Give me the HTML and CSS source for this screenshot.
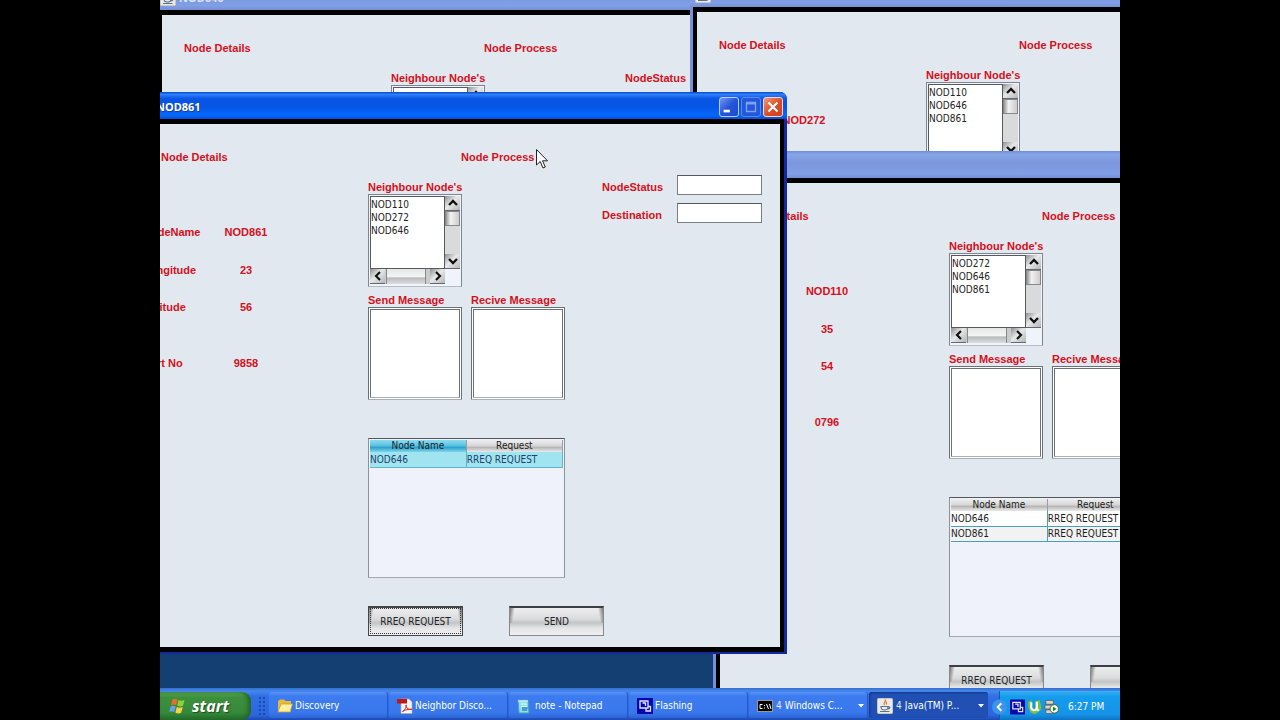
FILE: index.html
```html
<!DOCTYPE html>
<html lang="en">
<head>
<meta charset="utf-8">
<title>Node windows</title>
<link rel="stylesheet" href="styles.css">
</head>
<body>
<svg class="defs" aria-hidden="true">
  <symbol id="up" viewBox="0 0 10 8"><path d="M1 6 5 2 9 6" fill="none" stroke="#111" stroke-width="2.4"/></symbol>
  <symbol id="down" viewBox="0 0 10 8"><path d="M1 2 5 6 9 2" fill="none" stroke="#111" stroke-width="2.4"/></symbol>
  <symbol id="left" viewBox="0 0 8 10"><path d="M6 1 2 5 6 9" fill="none" stroke="#111" stroke-width="2.2"/></symbol>
  <symbol id="right" viewBox="0 0 8 10"><path d="M2 1 6 5 2 9" fill="none" stroke="#111" stroke-width="2.2"/></symbol>
  <symbol id="java" viewBox="0 0 16 16"><rect x=".5" y=".5" width="15" height="15" rx="1" fill="#eceae6" stroke="#c9c7c4"/><path d="M8 1.5c2 2-2.500 3-.5 5.500M9.500 3.500c-1 1 .8 1.500-.2 3" fill="none" stroke="#d9772b" stroke-width="1.200"/><path d="M4 8.500h7c0 3-1 3.500-3.500 3.500S4 11.500 4 8.500zM11 9c3-.5 2 2-.5 2M3 13.500h9.500" fill="none" stroke="#59738c" stroke-width="1.200"/></symbol>
  <symbol id="flash" viewBox="0 0 16 16"><rect width="16" height="16" fill="#0808a8"/><path d="M3 3h8v7H3zM5.500 5h3v3M11 8.500h2.500V13H9v-3" fill="none" stroke="#dfe3ff" stroke-width="1.300"/></symbol>
</svg>

<main class="desktop">
  <div class="workspace">

    <section class="window window-646" aria-label="NOD646">
      <header class="titlebar"><svg class="app-icon"><use href="#java"/></svg><h1>NOD646</h1></header>
      <div class="client">
        <div class="details"><h2>Node Details</h2></div>
        <div class="process">
          <h2>Node Process</h2>
          <h3>Neighbour Node's</h3>
          <div class="listbox">
            <select multiple aria-label="Neighbour nodes of NOD646"></select>
            <div class="vbar"><button aria-label="Scroll up"><svg><use href="#up"/></svg></button></div>
          </div>
        </div>
        <div class="status"><label for="s646">NodeStatus</label><input id="s646"></div>
      </div>
    </section>

    <section class="window window-272" aria-label="NOD272">
      <header class="titlebar"><svg class="app-icon"><use href="#java"/></svg></header>
      <div class="client">
        <div class="details">
          <h2>Node Details</h2>
          <dl><dt>NodeName</dt><dd>NOD272</dd></dl>
        </div>
        <div class="process">
          <h2>Node Process</h2>
          <h3>Neighbour Node's</h3>
          <div class="listbox">
            <select multiple aria-label="Neighbour nodes of NOD272"><option>NOD110</option><option>NOD646</option><option>NOD861</option></select>
            <div class="vbar"><button aria-label="Scroll up"><svg><use href="#up"/></svg></button><i class="thumb"></i><i class="track"></i><button aria-label="Scroll down"><svg><use href="#down"/></svg></button></div>
            <div class="hbar"></div>
          </div>
        </div>
      </div>
    </section>

    <section class="window window-110" aria-label="NOD110">
      <header class="titlebar"></header>
      <div class="client">
        <div class="details">
          <h2>Node Details</h2>
          <dl><dt>NodeName</dt><dd>NOD110</dd><dt>Longitude</dt><dd>35</dd><dt>Latitude</dt><dd>54</dd><dt>Port No</dt><dd>0796</dd></dl>
        </div>
        <div class="process">
          <h2>Node Process</h2>
          <h3>Neighbour Node's</h3>
          <div class="listbox">
            <select multiple aria-label="Neighbour nodes of NOD110"><option>NOD272</option><option>NOD646</option><option>NOD861</option></select>
            <div class="vbar"><button aria-label="Scroll up"><svg><use href="#up"/></svg></button><i class="thumb"></i><i class="track"></i><button aria-label="Scroll down"><svg><use href="#down"/></svg></button></div>
            <div class="hbar"><button aria-label="Scroll left"><svg><use href="#left"/></svg></button><i class="thumb"></i><button aria-label="Scroll right"><svg><use href="#right"/></svg></button></div>
          </div>
          <div class="messages">
            <div><label for="m110">Send Message</label><textarea id="m110"></textarea></div>
            <div><label for="r110">Recive Message</label><textarea id="r110"></textarea></div>
          </div>
          <div class="requests">
            <table>
              <thead><tr><th>Node Name</th><th>Request</th></tr></thead>
              <tbody><tr><td>NOD646</td><td>RREQ REQUEST</td></tr><tr><td>NOD861</td><td>RREQ REQUEST</td></tr></tbody>
            </table>
          </div>
          <div class="actions"><button class="steel">RREQ REQUEST</button><button class="steel">SEND</button></div>
        </div>
      </div>
    </section>

    <section class="window window-861 active" aria-label="NOD861">
      <header class="titlebar">
        <svg class="app-icon"><use href="#java"/></svg><h1>NOD861</h1>
        <div class="caption">
          <button aria-label="Minimize"><svg viewBox="0 0 20 20"><path d="M4 14.500h7" stroke="#fff" stroke-width="3"/></svg></button>
          <button class="dim" aria-label="Maximize"><svg viewBox="0 0 20 20"><path d="M5 5h10v10H5zM5 6.500h10" fill="none" stroke="#7fa0f4" stroke-width="1.500"/></svg></button>
          <button class="close" aria-label="Close"><svg viewBox="0 0 20 20"><path d="M5 5 15 15M15 5 5 15" stroke="#fff" stroke-width="2.400"/></svg></button>
        </div>
      </header>
      <div class="client">
        <div class="details">
          <h2>Node Details</h2>
          <dl><dt>NodeName</dt><dd>NOD861</dd><dt>Longitude</dt><dd>23</dd><dt>Latitude</dt><dd>56</dd><dt>Port No</dt><dd>9858</dd></dl>
        </div>
        <div class="process">
          <h2>Node Process</h2>
          <h3>Neighbour Node's</h3>
          <div class="listbox">
            <select multiple aria-label="Neighbour nodes of NOD861"><option>NOD110</option><option>NOD272</option><option>NOD646</option></select>
            <div class="vbar"><button aria-label="Scroll up"><svg><use href="#up"/></svg></button><i class="thumb"></i><i class="track"></i><button aria-label="Scroll down"><svg><use href="#down"/></svg></button></div>
            <div class="hbar"><button aria-label="Scroll left"><svg><use href="#left"/></svg></button><i class="thumb"></i><button aria-label="Scroll right"><svg><use href="#right"/></svg></button></div>
          </div>
          <div class="messages">
            <div><label for="m861">Send Message</label><textarea id="m861"></textarea></div>
            <div><label for="r861">Recive Message</label><textarea id="r861"></textarea></div>
          </div>
          <div class="requests">
            <table class="selected">
              <thead><tr><th>Node Name</th><th>Request</th></tr></thead>
              <tbody><tr><td>NOD646</td><td>RREQ REQUEST</td></tr></tbody>
            </table>
          </div>
          <div class="actions"><button class="steel focused">RREQ REQUEST</button><button class="steel">SEND</button></div>
        </div>
        <div class="status">
          <label for="s861">NodeStatus</label><input id="s861">
          <label for="d861">Destination</label><input id="d861">
        </div>
      </div>
    </section>

    <svg class="cursor" viewBox="0 0 12 20" aria-hidden="true"><path d="M.5.5v15.500l3.700-3.500 2.800 6.500 2.300-1-2.800-6.200h5z" fill="#fff" stroke="#222"/></svg>
  </div>

  <footer class="taskbar">
    <button class="start"><svg viewBox="0 0 18 18"><path d="M3.500 2.500c2-1.300 3.500-.8 5 0L7 8.200c-1.600-.8-3-1-5 0z" fill="#f0692f"/><path d="M9.500 3c2 1 3.500 1 6 0L14 8.800c-2 1-4 .9-5.800-.2z" fill="#8fd03c"/><path d="M1.700 9.500c2-1 3.500-.8 5 0L5.200 15c-1.700-1-3-1-5 0z" fill="#6ba0f0"/><path d="M7.800 10c2 1 3.500 1 6 0l-1.600 5.800c-2 1-4 .9-5.800-.2z" fill="#fbd23c"/></svg>start</button>
    <i class="grip"></i>
    <nav class="tasks">
      <button><svg viewBox="0 0 16 16"><path d="M1 14V3l2-1.500h4L8.500 3H14v11z" fill="#e7b93c"/><path d="M1 14 4 6h11.500L13 14z" fill="#fdf0a0" stroke="#c99a2c" stroke-width=".8"/></svg><span>Discovery</span></button>
      <button><svg viewBox="0 0 16 16"><path d="M4 1h8l3 3v11.500H4z" fill="#f7f3f1" stroke="#b9a8a8" stroke-width=".6"/><path d="M0 1h10v4.500H0z" fill="#c01818"/><path d="M5.500 13.500c4-3 4.500-7 3.500-6.500s1.500 5 5 4.500-4-1-8.500 2" fill="none" stroke="#d02020"/></svg><span>Neighbor Disco...</span></button>
      <button><svg viewBox="0 0 16 16"><path d="M1 2h10l1 13H2z" fill="#8fdcec" stroke="#4b9dc0"/><path d="M1 3h10M4 6h6M4 8.500h6" stroke="#e9fbff"/><path d="M5 9h6l-1 4H5z" fill="#3f9fc4"/></svg><span>note - Notepad</span></button>
      <button><svg><use href="#flash"/></svg><span>Flashing</span></button>
      <button class="group"><svg viewBox="0 0 16 16"><rect x=".5" y="2.500" width="15" height="11" fill="#050505" stroke="#999"/><path d="M5.500 6.500H3v4h2.500M7.500 7v1M7.500 9.500v1M9.500 6l2 5M12.500 6l1.500 5" fill="none" stroke="#fff"/></svg><b>4</b><span>Windows C...</span><svg class="drop" viewBox="0 0 6 4"><path d="M0 0h6L3 3.500z" fill="#fff"/></svg></button>
      <button class="group pressed"><svg><use href="#java"/></svg><b>4</b><span>Java(TM) P...</span><svg class="drop" viewBox="0 0 6 4"><path d="M0 0h6L3 3.500z" fill="#fff"/></svg></button>
    </nav>
    <div class="tray">
      <button aria-label="Show hidden icons"><svg viewBox="0 0 16 16"><circle cx="8" cy="8" r="8" fill="#3b93ee"/><path d="M10 4 6 8l4 4" fill="none" stroke="#fff" stroke-width="2"/></svg></button>
      <svg><use href="#flash"/></svg>
      <svg viewBox="0 0 16 16"><path d="M1 2.500 5 1v7c0 3 4 3 4 0L8.500 2l5-1.500c1 5 2.500 8 1 11L9 15.500C3 15.500 1 11 1 2.500z" fill="#7cbf45"/><path d="M4.500 3v5.500c.5 4 6 4 6-.5V2.500M10.500 10l2 2" fill="none" stroke="#f4faef" stroke-width="2.300"/></svg>
      <svg viewBox="0 0 16 16"><path d="M2 1h8v4H2zM1 6h8v4H1zM2 11h7v4H2z" fill="#d6d6cc" stroke="#555" stroke-width=".8"/><circle cx="11" cy="10" r="4.500" fill="#f7fbf3" stroke="#4b5b4b"/><path d="M9.500 7.500v5L13.500 10z" fill="#168a20"/></svg>
      <time>6:27 PM</time>
    </div>
  </footer>
</main>
</body>
</html>
```
FILE: styles.css
```css
* { box-sizing: border-box; }

body {
  margin: 0;
  background: #000;
  font-family: "Liberation Sans", Arial, sans-serif;
}

.defs { position: absolute; width: 0; height: 0; }

button, input, textarea, select { font: inherit; padding: 0; border: 0; margin: 0; border-radius: 0; }
svg { display: block; flex: none; }
h1, h2, h3, dl, dd { margin: 0; }

.desktop {
  display: flex;
  flex-direction: column;
  width: 75%;
  height: 100vh;
  margin: 0 auto;
  overflow: hidden;
  background: #133f73;
}

.workspace { position: relative; flex: 1; min-height: 0; overflow: hidden; }

/* Windows */
.window {
  position: absolute;
  width: 655px;
  height: 562px;
  display: flex;
  flex-direction: column;
  padding: 0 3px 2px;
  background: #7890dc;
}
.window-646 { left: -5px; top: -17px; }
.window-272 { left: 530px; top: -20px; }
.window-110 { left: 553px; top: 151px; }
.window-861 { left: -28px; top: 92px; }
.window.active { background: #14289c; border-radius: 7px 7px 0 0; }

.titlebar {
  display: flex;
  align-items: center;
  gap: 3px;
  height: 27px;
  margin: 0 -3px;
  padding: 2px 4px 0 5px;
  background: linear-gradient(#6c8ed8, #86a6e8 12%, #7c96dc 45%, #809fe4 85%, #7690d4);
  color: #dce4f8;
}
.active .titlebar {
  border-radius: 7px 7px 0 0;
  background: linear-gradient(#0a48c8, #2c80fa 9%, #0a55e4 25%, #0455e6 55%, #0468fc 85%, #0450d4);
  color: #fff;
}
.titlebar h1 { flex: 1; font: bold 11px/16px "Noto Sans", sans-serif; text-shadow: 1px 1px #1c3f90; }
.window-646 h1 { text-shadow: none; }
.app-icon { width: 16px; height: 16px; }

.caption { display: flex; gap: 2px; }
.caption button {
  width: 20px;
  height: 20px;
  border: 1px solid #b8ccf8;
  border-radius: 3px;
  background: linear-gradient(135deg, #7098f4, #2454d8 50%, #1c4ccc);
}
.caption svg { width: 18px; height: 18px; }
.caption .dim { border-color: #5c88ec; background: #2458dc; }
.caption .close { border-color: #f4d4cc; background: linear-gradient(135deg, #f09878, #dc4c24 55%, #c84420); }

.client {
  flex: 1;
  display: grid;
  grid-template-columns: 229px 234px 1fr;
  border: solid #000;
  border-width: 5px 4px;
  background: #e1e8ef;
  color: #d4101c;
  font-weight: bold;
  font-size: 11px;
  line-height: 16px;
}
.client h2, .client h3 { font-size: 11px; line-height: 16px; white-space: nowrap; }

.details { padding-top: 25px; }
.details h2 { padding-left: 22px; }
.details dl {
  display: grid;
  grid-template-columns: 58px 90px;
  grid-template-rows: 38px 37px 56px 16px;
  padding: 59px 0 0 4px;
}
.details dt { white-space: nowrap; }
.details dd { text-align: center; }

.process { padding-top: 25px; }
.process h2 { padding-left: 93px; }
.process h3 { padding-top: 14px; margin-bottom: -1px; }

/* Neighbour list with its scroll bars */
.listbox {
  display: grid;
  grid-template-columns: 1fr 15px;
  grid-template-rows: 1fr 15px;
  width: 94px;
  height: 93px;
  padding: 1px 1px 2px;
  border: 1px solid #7c868c;
  border-bottom-color: #b4bcc2;
  background: #f0f2fc;
}
.listbox select {
  appearance: none;
  min-width: 0;
  min-height: 0;
  overflow: hidden;
  outline: 0;
  border: 1px solid #555b60;
  padding-top: 2px;
  background: #fff;
  color: #222;
}
.listbox select, .requests, .steel { font: 10px/13px "DejaVu Sans Condensed", "DejaVu Sans", sans-serif; }
.listbox option { height: 13px; min-height: 13px; padding: 0; line-height: 13px; }
.vbar { display: flex; flex-direction: column; background: #c8cccf; }
.hbar { display: flex; background: #c8cccf; }
.vbar button, .hbar button {
  display: grid;
  place-items: center;
  width: 15px;
  height: 15px;
  flex: none;
  border: solid #62686c;
  border-width: 0 0 1px;
  background: linear-gradient(135deg, #8c8f92, #e8e8e8 45%, #b4b6b8);
}
.vbar svg { width: 10px; height: 8px; }
.hbar svg { width: 8px; height: 10px; }
.vbar .thumb { height: 15px; border: 1px solid #888; background: linear-gradient(90deg, #999, #f2f2f2 35%, #ccc); }
.vbar .track { flex: 1; background: #d8dadc; }
.hbar .thumb { flex: 1; margin: 0 4px 0 1px; background: linear-gradient(#e6e6e6, #f4f4f4 50%, #b9bbbd 60%, #ddd); border: solid #888; border-width: 0 1px; }

.messages { display: flex; gap: 9px; padding-top: 5px; }
.messages > div { display: flex; flex-direction: column; }
.messages textarea {
  width: 94px;
  height: 93px;
  margin-top: -1px;
  resize: none;
  border: 3px double #6a7278;
  border-bottom-color: #a8b0b6;
  background: #fff;
}
.messages label { white-space: nowrap; width: 94px; }

.requests {
  width: 197px;
  height: 140px;
  margin-top: 38px;
  padding: 1px 1px 0;
  border: 1px solid #70787e;
  border-color: #50585e #8c9298 #a4a8b0;
  background: #f0f2fb;
  color: #1c1c1c;
}
.requests table { width: 100%; table-layout: fixed; border-collapse: collapse; }
.requests th {
  height: 12px;
  padding: 0;
  font-weight: normal;
  line-height: 12px;
  border-right: 1px solid #9a9ea2;
  background: linear-gradient(#eee, #d6d6d6 50%, #b4b4b4 60%, #eaeaea);
}
.requests td {
  height: 15px;
  padding: 0;
  line-height: 13px;
  border: solid #48a0bc;
  border-width: 0 1px 1px 0;
  background: #fff;
}
.requests tr:nth-child(2) td { background: #f2f2f2; }
.requests .selected td { background: #a0e4f0; color: #20406c; border-color: #62b4cc; }
.requests .selected th:first-child { background: linear-gradient(#8cdcf0, #58c0e0 50%, #28a0cc 60%, #80d4ec); }

.actions { display: flex; gap: 46px; margin-top: 28px; }
.steel {
  width: 95px;
  height: 30px;
  flex: none;
  border: 1px solid #888;
  border-top: 2px solid #3c4044;
  background:
    linear-gradient(100deg, #777, transparent 60%) left top / 6px 15px no-repeat,
    linear-gradient(260deg, #777, transparent 60%) right top / 6px 15px no-repeat,
    linear-gradient(#eee, #dadcde 40%, #c2c4c6 55%, #e4e5e6 75%, #f0f0f0);
  color: #222;
}
.steel.focused { outline: 1px dotted #333; outline-offset: -3px; border-color: #444; }

.status {
  display: grid;
  grid-template-columns: 75px 85px;
  grid-auto-rows: 20px;
  row-gap: 8px;
  align-content: start;
  padding-top: 51px;
}
.status label { padding-top: 4px; }
.status input { min-width: 0; border: 1px solid #788086; border-top-color: #50585e; background: #fff; }

.cursor { position: absolute; left: 376px; top: 149px; width: 12px; height: 20px; }

/* Taskbar */
.taskbar {
  display: flex;
  height: 32px;
  background: linear-gradient(#3470d0, #4488ec 10%, #3070e4 25%, #2c66dc 85%, #1c48b0);
  color: #fff;
  font: 10px/16px "DejaVu Sans Condensed", "DejaVu Sans", sans-serif;
}
.taskbar button { color: inherit; }
.start {
  display: flex;
  align-items: center;
  gap: 5px;
  width: 91px;
  margin-top: 4px;
  padding-left: 9px;
  border-radius: 0 9px 9px 0;
  background: linear-gradient(#5caa5c, #3c903c 20%, #34883a 75%, #246c28);
  box-shadow: inset -3px 0 4px #246428;
}
.taskbar .start { font: italic bold 16px/20px "Open Sans", sans-serif; text-shadow: 1px 1px 1px #1c4c1c; }
.start svg { width: 18px; height: 18px; }
.grip {
  width: 7px;
  margin: 8px 4px 4px 7px;
  background: radial-gradient(circle, #1c48b0 1px, transparent 1px) 0 0 / 4px 4px;
}
.tasks { display: flex; flex: 1; min-width: 0; gap: 1px; padding: 4px 11px 2px 0; }
.tasks button {
  flex: 1;
  min-width: 0;
  display: flex;
  align-items: center;
  gap: 2px;
  padding: 2px 4px 0 8px;
  border-radius: 3px;
  background: linear-gradient(#5c94f8, #3c7cf0 15%, #3878ec 80%, #2c64d4);
  box-shadow: inset -1px 0 #2858c8;
  text-align: left;
}
.tasks svg { width: 16px; height: 16px; }
.tasks span { flex: 1; white-space: nowrap; overflow: hidden; }
.tasks b { font-weight: normal; color: #f0e8d8; }
.tasks .group { gap: 3px; }
.tasks .pressed { background: #2050b4; box-shadow: inset 1px 1px 2px #143884; }
.tasks .drop { width: 6px; height: 4px; }

.tray {
  display: flex;
  align-items: center;
  gap: 2px;
  width: 121px;
  margin-top: 3px;
  padding-top: 2px;
  border-left: 1px solid #1858a8;
  background: linear-gradient(#38b0f4, #149cec 20%, #1494e8 80%, #1070c0);
}
.tray button { width: 16px; margin-left: -8px; background: none; }
.tray svg { width: 15px; height: 16px; }
.tray time { padding-left: 7px; white-space: nowrap; }
```
